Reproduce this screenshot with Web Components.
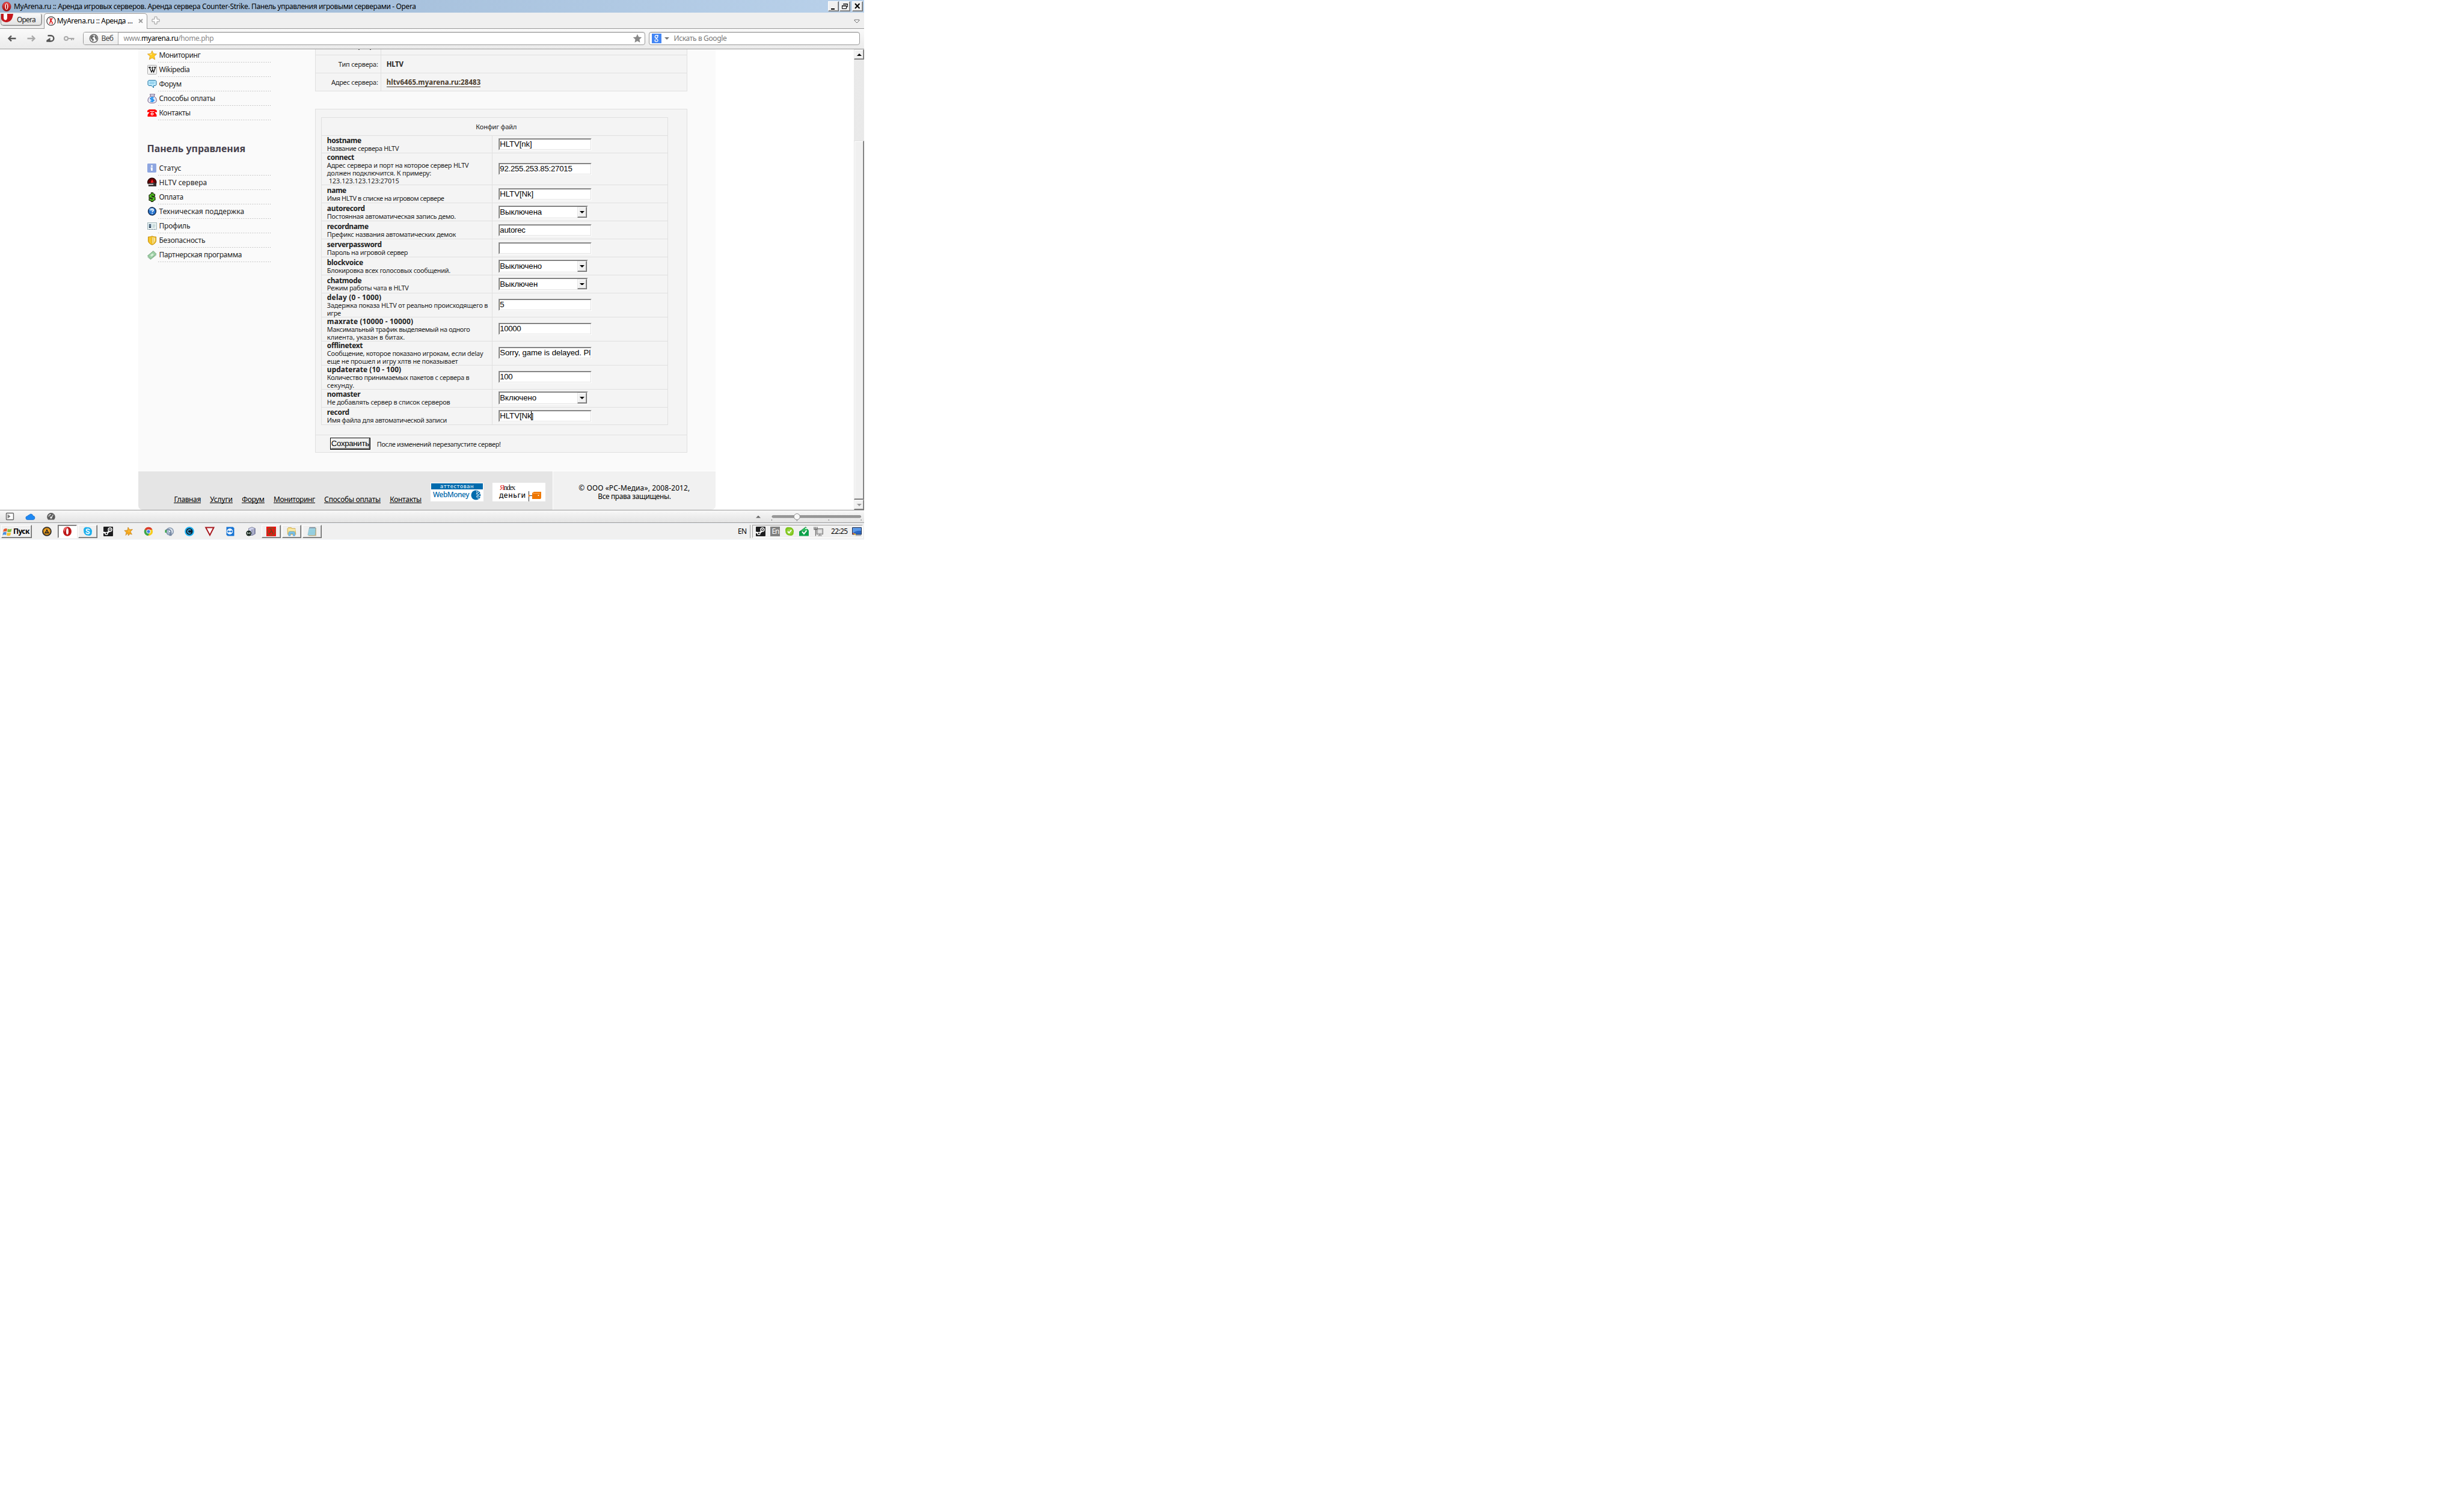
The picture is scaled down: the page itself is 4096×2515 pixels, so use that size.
<!DOCTYPE html>
<html lang="ru">
<head>
<meta charset="utf-8">
<title>MyArena.ru</title>
<style>
html,body{margin:0;padding:0;background:#fff;overflow:hidden}
</style>
</head>
<body>
<desktop-shot></desktop-shot>
<script>
const T='"Noto Sans","DejaVu Sans",sans-serif';
const SCALE=0.998;
const make=(name,css,html,after)=>customElements.define(name,class extends HTMLElement{
  constructor(){super();this.attachShadow({mode:'open'});}
  connectedCallback(){
    if(this.done)return;this.done=true;
    this.shadowRoot.innerHTML='<style>*{box-sizing:border-box}'+css+'</style>'+(typeof html==='function'?html(this):html);
    if(after)after(this);
  }
});
const I={
opera:'<defs><linearGradient id="g" x2="0" y2="1"><stop stop-color="#f05050"/><stop offset="1" stop-color="#a00808"/></linearGradient></defs><ellipse cx="8" cy="8" rx="7.2" ry="7.8" fill="url(#g)" stroke="#8a0c0c" stroke-width=".5"/><ellipse cx="8" cy="8" rx="2.6" ry="5.4" fill="#fff"/><ellipse cx="8" cy="8" rx="1.1" ry="4.6" fill="#b01515"/>',
operaTask:'<ellipse cx="8" cy="8" rx="7" ry="7.8" fill="#c01818"/><ellipse cx="6" cy="5" rx="4" ry="4" fill="#e86060"/><ellipse cx="8" cy="8" rx="3.6" ry="5.8" fill="#b01010"/><ellipse cx="8" cy="8" rx="2" ry="5.2" fill="#fff"/>',
cs:'<circle cx="8" cy="8" r="7.2" fill="#fff" stroke="#333" stroke-width="1.2"/><path d="M5 3.5h6v1.2H9.5l-.8 2.8 2.3 3-.8 3-1.3-.2.4-2.5-1.7-1.8-1.4 4-1.4-.4 1.3-4.6.4-3.2H5z" fill="#d22"/>',
back:'<path d="M7 3.500 2.500 8 7 12.500M3 8h11.500" fill="none" stroke="#555" stroke-width="2.4"/>',
fwd:'<path d="M9 3.500 13.500 8 9 12.500M13 8H1.500" fill="none" stroke="#aaa" stroke-width="2.4"/>',
reload:'<path d="M3.500 3.200h5.200a4.700 4.700 0 0 1 0 9.400H6" fill="none" stroke="#555" stroke-width="2.400"/><path d="M7.500 6.800v7H1.300V11z" fill="#555"/>',
key:'<circle cx="4" cy="8" r="3" fill="none" stroke="#aaa" stroke-width="2"/><path d="M7 8h10.5M13 8v3M16 8v2.6" stroke="#aaa" stroke-width="2"/>',
globe:'<circle cx="8" cy="8" r="6.6" fill="#fff" stroke="#6a6a6a" stroke-width="1.6"/><path d="M3 4.5 6 3l2.500.8-.6 2-2 .8.3 1.700 2 .8-.5 2.500-1.600 1.600-1-2.700L2.500 8zM10 3l2.500 1.800 1.200 3.500-1.500 2.700-1.500-2-.5-2L9 6z" fill="#6a6a6a"/>',
star:'<path d="M8 .8l2.200 4.700 5.100.6-3.800 3.500 1 5.200L8 12.200l-4.500 2.600 1-5.200L.7 6.100l5.100-.6z" fill="#888"/>',
star2:'<path d="M8 .4l2.200 4.900 5.400.6-4 3.700 1.100 5.500L8 12.400l-4.700 2.700 1.100-5.500-4-3.700 5.400-.6z" fill="#ffcc22" stroke="#d89a20" stroke-width=".8"/><path d="M8 2.500 6.600 6l-3.600.6 4 1z" fill="#fff0a0"/>',
google:'<rect width="16" height="16" fill="#4285f4"/><g fill="none" stroke="#fff" stroke-width="1.300"><ellipse cx="7.600" cy="5" rx="2.300" ry="2.400"/><path d="M9 3h2M8 7.400c-2 1 .2 1.600 1.400 2.400 1.600 1.200.6 3.600-2 3.600s-3.400-2.400-1-3.400"/></g>',
wiki:'<rect x=".5" y=".5" width="15" height="15" rx="1" fill="#f2f2f2" stroke="#aaa"/><path d="M2 4h4M8 4h2M11 4h3.500M3.500 4 7 12 9 7.500 7.500 4.200M8.500 7.500 10.600 12 13.500 4" fill="none" stroke="#111" stroke-width="1.300"/>',
forum:'<path d="M2.500 1.500h11l1.500 1.500v6l-1.500 1.500h-3v3.500l-3.500-3.500H2.500L1 9V3z" fill="#bfeafc" stroke="#1a6fa0"/><path d="M3.500 4.500h9M3.500 7h8" stroke="#62b4dc"/>',
money:'<path d="M4.500.8h8l-1.500 3.400c3 1.500 4.200 4 4.200 6.800 0 3.200-2 4.400-7.200 4.400S1 14 1 11c0-3 1.500-5.300 4.500-6.800z" fill="#e8eaf6" stroke="#6a5580"/><path d="M5 4h6.500" stroke="#6a5580"/><path d="M11 6.500H6.500L5 8l1.500 1.500h3L11 11l-1.500 1.500H5M8 5v9" fill="none" stroke="#1a90f0" stroke-width="1.700"/>',
phone:'<path d="M0 6.500V4l3-2h10l3 2v2.500h-4.500V5h-7v1.500zM4 6h8l3.500 5v3H.5v-3z" fill="#f00"/><circle cx="8" cy="9.600" r="2.400" fill="#fff"/><circle cx="8" cy="9.600" r="1.100" fill="#f00"/>',
info:'<rect x="0" y="0" width="15" height="15" rx="1.500" fill="#8ea6e0"/><path d="M6.200 2.800h2.600v2.600H6.200zM5.500 6.500h3.300v5.500H6.200z" fill="#fff"/>',
hltv:'<path d="M1 9a7 7 0 1 1 13.500 0z" fill="#600" stroke="#200" stroke-width="1.400"/><path d="M8 2 5.500 8h5z" fill="#f22"/><path d="M1.500 9 11 7.500l4 1.500v5H2z" fill="#332e2e"/><path d="M2 9.800h8v1.700H2z" fill="#ddd"/>',
dollar:'<path d="M6.500.5h3v1.800l3 1v3H9L7.500 5.500v1l5.500 2v4l-3.500 1.700v1.300h-3v-1.300l-3.500-1v-3h3l1.500 1.300 1-.4V10L3 8.500v-4l3.500-2z" fill="#4fc21e" stroke="#222c10" stroke-width="1.200"/>',
help:'<circle cx="8" cy="7.500" r="6.500" fill="#2c78d0" stroke="#0c2244" stroke-width="1.300"/><ellipse cx="7" cy="4.500" rx="4" ry="2.500" fill="#74aeea"/><path d="M6 5.500c0-2.500 4.200-2.200 4.200.2C10.200 7 8.200 7.200 8.200 8.600M8.200 10v1.600" fill="none" stroke="#fff" stroke-width="1.600"/>',
card:'<rect x=".5" y="2.500" width="15" height="11" fill="#edf5f5" stroke="#9fb4b8"/><rect x="2" y="4.500" width="5" height="6.500" fill="#a8c4d8"/><circle cx="4.500" cy="6.300" r="1.300" fill="#234"/><path d="M3 11V8.500h3V11z" fill="#234"/><path d="M8.500 6h5M8.500 8h5M8.500 10h4" stroke="#a5bcbc" stroke-width=".9"/><path d="M3 13.500h10" stroke="#789" stroke-dasharray="2 2"/>',
shield:'<path d="M1.500 2Q5 2.400 8 .8 11 2.400 14.500 2v7q-1 4.600-6.500 6.300Q2.500 13.600 1.500 9z" fill="#f6c62c" stroke="#c08a10"/><path d="M8 2.600v11q4.300-1.500 5-5V3.500Q10 3.600 8 2.600z" fill="#fff3b4"/><path d="M8 2.600v11M10.800 3.500v8.500" stroke="#dca51c"/>',
cash:'<path d="M.5 9.500 10 1.500l5 5-9.500 8.500z" fill="#9cd0a4" stroke="#6f9c78" stroke-width=".9"/><path d="M.5 11.500 5.500 15.500 15 8" fill="none" stroke="#8bb894"/><ellipse cx="7.800" cy="8" rx="2.800" ry="1.900" transform="rotate(-40 8 8)" fill="#d2ecd4"/>',
panel:'<rect x="1.500" y="2.500" width="12" height="11" rx="1" fill="#fff" stroke="#666" stroke-width="1.400"/><path d="M4 4.500v7M4.500 5.500 8 8l-3.500 2.500z" stroke="#777" fill="#777" stroke-width=".8"/>',
cloud:'<path d="M3 13.500a3 3 0 0 1-.3-6 2.500 2.500 0 0 1 2.500-1.700 3.600 3.600 0 0 1 6.700 1.200 3.300 3.300 0 0 1 .6 6.500z" fill="#1e88f2" stroke="#1468c4" stroke-width=".7"/>',
gauge:'<path d="M3 13.500a6.800 6.800 0 1 1 10 0z" fill="#5a5a5a"/><path d="M4 8.500a4 4 0 0 1 4-3.600M11.500 5 9 9.500" fill="none" stroke="#eee" stroke-width="1.100"/><circle cx="8" cy="10" r="1.700" fill="#eee"/>',
flag:'<path d="M1 4.500Q4 2 7 3.500L6 8.500Q3 7 .3 9z" fill="#e4572e"/><path d="M8 3.800Q11 5.500 14.500 3.500L13.500 8.500Q10 10 7 8.600z" fill="#7fb93c"/><path d="M.2 10Q3 8 5.800 9.500L5 14Q2 12.500-.7 14.500z" fill="#4a90dc"/><path d="M6.800 9.700q3 1.500 6.400 0L12.200 14.500q-3 1.600-6.200.1z" fill="#f7c331"/>',
aimp:'<circle cx="8" cy="8" r="7" fill="#f6a623" stroke="#222" stroke-width="1.600"/><circle cx="8" cy="8" r="5.300" fill="none" stroke="#6b4408" stroke-width=".6"/><path d="M8 3.800 4 11.200h8z" fill="#222"/><path d="M8 7 6.700 9.600h2.600z" fill="#f6a623"/>',
skype:'<path d="M1 5A4.500 4.500 0 0 1 7 1a7 7 0 0 1 7.800 8.800A4.500 4.500 0 0 1 9 14.800 7 7 0 0 1 1.200 7z" fill="#1db0ee"/><path d="M10.800 5.800C10.500 3.300 5.300 3.400 5.500 6c.2 2.300 5.200 1.500 5.200 3.900 0 2.400-5.200 2.300-5.600-.2" fill="none" stroke="#fff" stroke-width="1.700"/>',
steam:'<rect width="16" height="16" rx="1" fill="#1c1c1e"/><path d="M0 9.500 5.500 11 10 7.500" stroke="#fff" stroke-width="2.600" fill="none"/><circle cx="11" cy="5" r="3" fill="#1c1c1e" stroke="#fff" stroke-width="1.500"/><circle cx="11" cy="5" r="1.200" fill="#ddd"/><circle cx="5" cy="11.500" r="2" fill="#1c1c1e" stroke="#fff" stroke-width="1.300"/>',
fig:'<path d="M7 1l2.500 4 5-.5-3.500 4 2.500 4.500-3.500-1L7.500 15l-1-4-3.500 3.500 1-5L.8 6.500 6 6z" fill="#f6a81c" stroke="#b87408" stroke-width=".6"/><path d="M7 3.500 8 7l3-.5-3 2z" fill="#ffd870"/>',
chrome:'<circle cx="8" cy="8" r="7.200" fill="#f6cb1c"/><path d="M8 8 1.600 4.600A7.200 7.200 0 0 1 14.500 5H8z" fill="#dc3a2c"/><path d="M8 8 1.600 4.600A7.200 7.200 0 0 0 7.200 15.200L10.500 9.500z" fill="#3aa64c"/><circle cx="8" cy="8" r="3.600" fill="#fff"/><circle cx="8" cy="8" r="2.600" fill="#3b7de0"/>',
ts:'<circle cx="9.500" cy="8" r="5.800" fill="#e4ebf3" stroke="#8fa0b6" stroke-width="1.800"/><path d="M3 6a5 5 0 0 1 8.500 3v5.500h-2V9" fill="none" stroke="#6f839e" stroke-width="1.800"/><rect x="1.500" y="5.500" width="2.600" height="4.500" fill="#35a24a"/><path d="M6.500 6v8" stroke="#8ba0bc" stroke-width="2"/>',
cc:'<circle cx="8" cy="8" r="7.800" fill="#1aaef0"/><circle cx="8" cy="8" r="5.600" fill="#10202e"/><path d="M10.300 6A3 3 0 1 0 10.300 10" fill="none" stroke="#38b4ee" stroke-width="1.500"/>',
vv:'<path d="M1.200 1.500h13.300L8 14.200z" fill="#fff" stroke="#a8181e" stroke-width="2"/>',
tv:'<path d="M1.500.5h11l2 2v13h-11l-2-2z" fill="#1774d4"/><circle cx="7.200" cy="8" r="5" fill="#eef6ff"/><path d="M2.800 8 5.500 5.800v1.500h3.500V5.800L11.800 8 9 10.200V8.700H5.500v1.500z" fill="#1774d4"/>',
box:'<path d="M4.500 3 10 .8 15.500 3v9L11 14.500H5z" fill="#cfd3ec" stroke="#6b6f8c" stroke-width=".8"/><path d="M9 5l6-2v9l-5 2z" fill="#8b90b4"/><path d="M12 4v8" stroke="#eee"/><circle cx="4.800" cy="11" r="4.500" fill="#16241c"/><path d="M2.700 12.800V9.300L4.800 12l2.100-2.700v3.500" stroke="#d8e4d8" fill="none"/>',
lambda:'<rect width="16" height="16" fill="#f01010"/><circle cx="8" cy="8" r="6.300" fill="none" stroke="#7a5a28" stroke-width="1.500"/><path d="M5.500 4h2L11 12M8 7.500 5 12.200" fill="none" stroke="#6a4a20" stroke-width="1.600"/>',
folder:'<path d="M1 3.500 2.500 1.500h5L8.500 3h5.500v2l1 8H1.500z" fill="#f3dc86" stroke="#c7a548" stroke-width=".8"/><path d="M2.500 5.500h12" stroke="#fff6c8" stroke-width="1.400"/><path d="M3 15.200V9.700l1.500-1.500h7.500l1.500 1.500v5.500h-3v-3.500H6v3.500z" fill="#7cc3ec" stroke="#4b93c4" stroke-width=".7"/>',
note:'<path d="M4 2h11v13.500H2z" fill="#c9b484"/><path d="M3.500 1.800h10.300L13 14H1z" fill="#a6d9e8" stroke="#6aa6ba" stroke-width=".6"/><path d="M3.500 5.500h9.500M3.200 7.500h9.500M3 9.500h9.500M2.600 11.500h9.500" stroke="#78bccf" stroke-width=".7"/><path d="M4 1.800h10" stroke="#556" stroke-width="2" stroke-dasharray="1 1"/>',
skypeg:'<path d="M1 5A4.500 4.500 0 0 1 7 1a7 7 0 0 1 7.800 8.800A4.500 4.500 0 0 1 9 14.800 7 7 0 0 1 1.200 7z" fill="#7ec41c"/><circle cx="8" cy="8" r="4.800" fill="#95d43a"/><path d="M5 8l2.300 2.300L11.200 5.500" fill="none" stroke="#fff" stroke-width="1.900"/>',
usb:'<path d="M0 8 5 6v9.500H0zM5 6h11v9.500H5z" fill="#0ba14a"/><path d="M1 8 11 .5l4 4.500-4 3z" fill="#2fbf5f" stroke="#087838" stroke-width=".7"/><path d="M10 3h6" stroke="#fff" stroke-width="1.500"/><path d="M5 8.500l3 3.500 4.500-5.500" fill="none" stroke="#fff" stroke-width="2"/>',
net:'<rect x="5.500" y="3.500" width="10" height="9" fill="#c9c9c9" stroke="#777"/><rect x="7.500" y="5.500" width="6" height="5" fill="#e6e6e6"/><path d="M7 15h7M10.500 13v2" stroke="#777"/><path d="M1 .5v4h5v-4M3.500.5v3.500M3.500 5v10.500" stroke="#666" stroke-width="1.300" fill="none"/>',
screen:'<path d="M.5 1.500h15v11.500H.5z" fill="#2c66c0" stroke="#1a2c50"/><path d="M1 2h14v5Q7 6 1 11z" fill="#5b98e6"/><path d="M6 14.500h9" stroke="#aaa" stroke-width="1.600"/><path d="M1 10.500h2.500v2.300H1z" fill="#e85a30"/><path d="M3.500 11.500H6V14H3.500z" fill="#f2c530"/>'
};
make('ui-icon',':host{display:inline-flex;flex:none;width:16px;height:16px}svg{display:block;width:100%;height:100%;overflow:visible}',
 e=>`<svg viewBox="0 0 16 16">${I[e.getAttribute('name')]}</svg>`);

make('title-bar',`:host{display:flex;height:21px;background:linear-gradient(90deg,#99b4d1,#b9d1ea);align-items:center;padding:0 2px 0 3px;font:12px ${T};color:#000}
 .t{margin-left:4px;flex:1;line-height:20px;padding-top:1px}
 b{display:flex;width:18px;height:17px;margin-right:1px;background:#f0f0f0;border:1px solid;border-color:#fff #696969 #696969 #fff;box-shadow:inset -1px -1px #a0a0a0}b:last-child{margin:0 0 0 2px}svg{width:16px;height:15px}`,
 `<ui-icon name="opera"></ui-icon><div class="t"><fit-text w="670">MyArena.ru :: Аренда игровых серверов. Аренда сервера Counter-Strike. Панель управления игровыми серверами - Opera</fit-text></div>
 <b><svg><path d="M4 11h6v2H4z"/></svg></b><b><svg fill="none" stroke="#000"><path d="M5.500 3.500h7v5h-2M5 4h8M3.500 6.500h7v5h-7zM3 7h8"/></svg></b><b><svg><path d="M4 3l7.500 8M11.500 3 4 11" stroke="#000" stroke-width="2"/></svg></b>`);

make('tab-strip',`:host{display:flex;height:27px;background:#efefef;border-bottom:1px solid #999;font:12px/19px ${T};color:#000}
 .o{width:69px;height:20px;margin:2px 0 0 1px;border:1px solid #888;border-top:0;border-radius:0 3px 5px 5px;background:linear-gradient(#f8f8f8,#e2e2e2);display:flex;color:#222;box-shadow:inset -1px -1px #bbb}
 .o fit-text{margin-left:6px;line-height:20px}.o svg{width:20px;height:15px;flex:none}
 .tab{margin:1px 0 -1px 3px;width:173px;height:26px;border:1px solid #999;border-width:1px 1px 0;border-radius:5px 5px 0 0;background:linear-gradient(#fff,#f9f9f9);display:flex;align-items:center;padding-left:3px}
 .tab fit-text{margin-left:2px;line-height:26px}.x{width:8px;height:8px;margin-left:10px}
 .plus{width:14px;height:14px;margin:6px 0 0 7px}.m{width:10px;height:7px;margin:11px 7px 0 auto}`,
 `<div class="o"><svg><path d="M0 0h20Q18.500 14 8 14 1 13 0 8z" fill="#c4161c"/><path d="M4 0h6v6Q10 10 7.500 10.500 4 10.500 4 6z" fill="#fff"/></svg><fit-text w="31">Opera</fit-text></div>
 <div class="tab"><ui-icon name="cs"></ui-icon><fit-text w="126">MyArena.ru :: Аренда ...</fit-text><svg class="x"><path d="M1 1l6 6M7 1 1 7" stroke="#999" stroke-width="1.800"/></svg></div>
 <svg class="plus"><path d="M5 1h4v4h4v4H9v4H5V9H1V5h4z" fill="#fff" stroke="#999"/></svg><svg class="m"><path d="M1 1h8v1L5 6 1 2z" fill="#fff" stroke="#666"/></svg>`);

make('address-bar',`:host{display:flex;height:34px;background:linear-gradient(#fafafa,#ebebeb);border-bottom:1px solid #999;align-items:center;font:12px/20px ${T};color:#888}
 .f{height:22px;border:1px solid #999;border-radius:4px;background:#fff;display:flex;align-items:center;box-shadow:inset 0 1px #ddd}
 .a{margin-left:12px;width:937px;overflow:hidden}.w{width:59px;height:20px;border-right:1px solid #aaa;background:linear-gradient(#fcfcfc,#ececec);display:flex;align-items:center;padding-left:9px;color:#444}
 .w fit-text{margin-left:5px}i{font-style:normal;color:#000}.s{margin-left:6px;width:352px;padding-left:4px;color:#777}`,
 `<ui-icon name="back" style="margin-left:12px"></ui-icon><ui-icon name="fwd" style="margin-left:16px"></ui-icon><ui-icon name="reload" style="margin-left:16px"></ui-icon><ui-icon name="key" style="margin:0 4px 0 14px"></ui-icon>
 <div class="f a"><div class="w"><ui-icon name="globe"></ui-icon><fit-text w="20">Веб</fit-text></div><fit-text w="150" style="margin-left:8px">www.<i>myarena.ru</i>/home.php</fit-text><ui-icon name="star" style="margin:0 4px 0 auto"></ui-icon></div>
 <div class="f s"><ui-icon name="google"></ui-icon><svg width="8" height="4" style="margin:0 8px 0 5px"><path d="M0 0h8L4 4z" fill="#777"/></svg><fit-text w="88">Искать в Google</fit-text></div>`);

const menu=a=>a.map(([i,t,w])=>`<menu-row icon="${i}"><fit-text w="${w}">${t}</fit-text></menu-row>`).join('');
make('menu-row',`:host{display:flex;height:24px;align-items:center}
 div{margin-left:3px;flex:1;height:24px;line-height:25px;padding-left:1px;background:repeating-linear-gradient(90deg,#aaa 0 1px,transparent 1px 3px) 0 100%/100% 1px no-repeat}`,
 e=>`<ui-icon name="${e.getAttribute('icon')}"></ui-icon><div><slot></slot></div>`);
make('side-menu',`:host{display:block;width:221px;padding-left:15px;font:12px ${T};color:#222}
 h2{font:bold 16px/24px ${T};color:#46414d;margin:36px 0 9px;height:24px}section{height:120px;margin-top:-2px}.n{margin-top:0}`,
 `<section>${menu([['star2','Мониторинг',69],['wiki','Wikipedia',51],['forum','Форум',37.5],['money','Способы оплаты',93.5],['phone','Контакты',52.5]])}</section>
 <h2><fit-text w="164">Панель управления</fit-text></h2>
 <section class="n">${menu([['info','Статус',37],['hltv','HLTV сервера',80],['dollar','Оплата',40.5],['help','Техническая поддержка',142],['card','Профиль',52],['shield','Безопасность',77],['cash','Партнерская программа',138]])}</section>`);

make('text-box',`:host{display:block;width:155px;height:20px;background:#fff;border:1px solid;border-color:#a0a0a0 #fff #fff #a0a0a0;font:13.33px/17px "Liberation Sans",Arial,sans-serif;color:#000;margin-left:10px;overflow:hidden}
 div{height:18px;border:1px solid;border-color:#696969 #e3e3e3 #e3e3e3 #696969;white-space:nowrap;overflow:hidden}`,'<div><slot></slot></div>');
make('select-box',`:host{display:block;width:149px;height:22px;background:#fff;border:1px solid;border-color:#a0a0a0 #fff #fff #a0a0a0;font:13.33px/19px "Liberation Sans",Arial,sans-serif;color:#000;margin-left:10px}
 div{height:20px;border:1px solid;border-color:#696969 #e3e3e3 #e3e3e3 #696969;display:flex;justify-content:space-between}
 b{width:16px;height:18px;background:#f0f0f0;border:1px solid;border-color:#e3e3e3 #696969 #696969 #e3e3e3;box-shadow:inset -1px -1px #a0a0a0,inset 1px 1px #fff}svg{display:block;margin:6px 0 0 3px}`,
 '<div><slot></slot><b><svg width="8" height="4"><path d="M0 0h8L4 4z"/></svg></b></div>');

make('config-row',`:host{display:flex;border-top:1px solid #e0e0e0}.l{width:285px;border-right:1px solid #e0e0e0;padding:2px 0 0 9px;display:flex;flex-direction:column;justify-content:center}
 .v{display:flex;align-items:center;flex:1}::slotted(fit-text){display:block}`,'<div class="l"><slot></slot></div><div class="v"><slot name="v"></slot></div>');
const rows=[
[30,'hostname',57,[['Название сервера HLTV',119.5]],'t','HLTV[nk]',53.5],
[53,'connect',45,[['Адрес сервера и порт на которое сервер HLTV',236],['должен подключится. К примеру:',173.500],['&nbsp;123.123.123.123:27015',120]],'t','92.255.253.85:27015',120.5],
[30,'name',32,[['Имя HLTV в списке на игровом сервере',195]],'t','HLTV[Nk]',56],
[30,'autorecord',63,[['Постоянная автоматическая запись демо.',214.500]],'s','Выключена',70],
[30,'recordname',69,[['Префикс названия автоматических демок',214.500]],'t','autorec',42.5],
[30,'serverpassword',91,[['Пароль на игровой сервер',134.500]],'t','',0],
[30,'blockvoice',60,[['Блокировка всех голосовых сообщений.',205.500]],'s','Выключено',70],
[30,'chatmode',57.5,[['Режим работы чата в HLTV',136]],'s','Выключен',63],
[40,'delay (0 - 1000)',90.500,[['Задержка показа HLTV от реально происходящего в',268],['игре',23]],'t','5',7],
[40,'maxrate (10000 - 10000)',143.500,[['Максимальный трафик выделяемый на одного',238],['клиента, указан в битах.',129.500]],'t','10000',35],
[40,'offlinetext',59.500,[['Сообщение, которое показано игрокам, если delay',260],['еще не прошел и игру хлтв не показывает',218]],'t','Sorry, game is delayed. Pl',151],
[40,'updaterate (10 - 100)',123.500,[['Количество принимаемых пакетов с сервера в',237],['секунду.',45.500]],'t','100',21],
[30,'nomaster',55.500,[['Не добавлять сервер в список серверов',205]],'s','Включено',61],
[30,'record',37,[['Имя файла для автоматической записи',199.500]],'t','HLTV[Nk]',56,1]];
make('config-table',`:host{display:block;width:578px;border:1px solid #e0e0e0;font:11px/13px ${T};color:#222}
 .h{height:29px;line-height:31px;text-align:center;padding-left:6px}.b{font-weight:bold;font-size:12px}u{display:inline-block;width:1px;height:15px;background:#000;margin-left:-4px;vertical-align:-3px}`,
 '<div class="h"><fit-text w="68">Конфиг файл</fit-text></div>'+rows.map(r=>{
  const c=r[4]=='t'?'text-box':'select-box';
  return `<config-row style="height:${r[0]}px"><fit-text class="b" w="${r[2]}">${r[1]}</fit-text>${r[3].map(d=>`<fit-text w="${d[1]}">${d[0]}</fit-text>`).join('')}<${c} slot="v">${r[5]?`<fit-text w="${r[6]}">${r[5]}</fit-text>`:''}${r[7]?'<u></u>':''}</${c}></config-row>`}).join(''));

make('info-panel',`:host{display:block;width:620px;height:70px;border:1px solid #e0e0e0;border-top:0;background:#f4f4f4;font:11px/30px ${T};color:#222}
 .r{display:flex;height:30px;border-top:1px solid #e0e0e0}.z{height:9px;border:0}.k{width:109px;border-right:1px solid #e0e0e0;text-align:right;padding-right:4px}.v{padding-left:9px;font-weight:bold;font-size:11.500px}
 .z .k{background:linear-gradient(#555,#555) 71px 0/2px 1px no-repeat,linear-gradient(#555,#555) 90px 0/2px 1px no-repeat}
 a{color:#4a3c2c;display:inline-block;line-height:13px;border-bottom:1px solid #4a3c2c}`,
 `<div class="r z"><div class="k"></div></div><div class="r"><div class="k"><fit-text w="66">Тип сервера:</fit-text></div><div class="v"><fit-text w="28">HLTV</fit-text></div></div>
 <div class="r"><div class="k"><fit-text w="78">Адрес сервера:</fit-text></div><div class="v"><a><fit-text w="157">hltv6465.myarena.ru:28483</fit-text></a></div></div>`);
make('config-panel',`:host{display:block;width:620px;height:574px;margin-top:29px;border:1px solid #e0e0e0;background:#f4f4f4;font:11px ${T};color:#222}
 .p{padding:13px 0 0 9px;height:542px}.s{border-top:1px solid #e0e0e0;height:30px;display:flex;align-items:center;padding-left:24px}
 button{all:unset;width:67px;height:20px;border:1px solid #000;box-sizing:border-box;background:#f0f0f0;box-shadow:inset -1px -1px #696969,inset 1px 1px #fff,inset -2px -2px #a0a0a0;font:13.33px/18px "Liberation Sans",Arial,sans-serif;color:#000;padding-left:1px;margin-right:11px}`,
 `<div class="p"><config-table></config-table></div><div class="s"><button><fit-text w="63">Сохранить</fit-text></button><fit-text w="206.500" style="padding-top:1px">После изменений перезапустите сервер!</fit-text></div>`);

make('wm-badge',`:host{display:flex;flex-direction:column;width:88px;height:31px;background:#fff;padding:1px;color:#0068ab;font:bold 8.500px/10px "DejaVu Sans",sans-serif}
 .t{background:#006bad;color:#fff;text-align:center;height:10px;font-weight:normal}.b{display:flex;align-items:center;height:19px;padding-left:3px;font:500 12px/19px "Noto Sans",sans-serif}svg{margin-left:3px}`,
 `<div class="t"><fit-text w="56">аттестован</fit-text></div><div class="b"><fit-text w="60">WebMoney</fit-text><svg width="17" height="17"><circle cx="8.500" cy="8.500" r="8" fill="#006bad"/><path d="M10 1.500v6M13 3l-4 5M16 6l-6 3M16 11l-6-1.500M13 14l-4-3.500" stroke="#fff" stroke-width="1.300" stroke-dasharray="2 1"/></svg></div>`);
make('ya-badge',`:host{display:flex;width:88px;height:31px;background:#fff;padding-left:11px;font:12.500px/12px "Liberation Serif",serif;color:#111}
 .x{width:46px;padding-top:3px}i{font-style:normal;color:#e02020}.d{font:500 12px/12px "Noto Sans",sans-serif}fit-text{display:block}`,
 `<div class="x"><fit-text w="25" style="margin-left:1px"><i>Я</i>ndex</fit-text><fit-text class="d" w="45">деньги</fit-text></div><svg width="28" height="31"><path d="M3.500 14v17M3 21.500h6" stroke="#333"/><circle cx="4" cy="21.500" r="1.500" fill="#f08020"/><path d="M9 17l3-2h12v10l-1 2H9z" fill="#ee7600"/><path d="M10 17.500h12" stroke="#ffb060"/><circle cx="19.500" cy="21" r="1" fill="#fff"/></svg>`);
make('site-footer',`:host{display:flex;width:962px;height:65px;border-top:1px solid #fff;font:12px/14px ${T};color:#000}
 .l{width:691px;background:#e5e5e5;border-radius:0 0 0 7px;display:flex;align-items:flex-start;padding-left:60px}.l a{margin:39px 15.400px 0 0;border-bottom:1px solid #000;height:14px;line-height:16px}
 .r{flex:1;border-left:1px solid #fff;background:#f1f1f1;border-radius:0 0 7px 0;text-align:center;padding:21px 0 0}`,
 `<div class="l">${[['Главная',44.6],['Услуги',37.6],['Форум',37.6],['Мониторинг',69],['Способы оплаты',93.7],['Контакты',52.7]].map(a=>`<a><fit-text w="${a[1]}">${a[0]}</fit-text></a>`).join('')}<wm-badge style="margin-top:19px"></wm-badge><ya-badge style="margin:19px 0 0 15px"></ya-badge></div>
 <div class="r"><fit-text w="185.500">© ООО «РС-Медиа», 2008-2012,</fit-text><br><fit-text w="121.500">Все права защищены.</fit-text></div>`);

make('scroll-bar',`:host{display:flex;flex-direction:column;width:17px;height:768px;background:repeating-conic-gradient(#fff 0 25%,#d4d4d4 0 50%) 0 0/2px 2px}
 div{background:#f0f0f0;border:1px solid;border-color:#e3e3e3 #696969 #696969 #e3e3e3;box-shadow:inset -1px -1px #a0a0a0,inset 1px 1px #fff;height:17px;flex:none}svg{display:block;margin:6px 0 0 4px}`,
 `<div><svg width="8" height="4"><path d="M4 0 8 4H0z"/></svg></div><div style="height:598px;margin-top:136px"></div><div><svg width="8" height="4"><path d="M0 0h8L4 4z" fill="#999"/></svg></div>`);

make('page-view',`:host{display:flex;height:768px;background:#fff;overflow:hidden;justify-content:space-between}
 .c{margin-left:230px;width:962px;background:linear-gradient(#fafafa,#fafafa) 0 0/100% 703px no-repeat}.m{display:flex;height:703px}.x{margin-left:74px}`,
 `<div class="c"><div class="m"><side-menu></side-menu><div class="x"><info-panel></info-panel><config-panel></config-panel></div></div><site-footer></site-footer></div><scroll-bar></scroll-bar>`);

make('status-bar',`:host{display:flex;height:22px;border-top:1px solid #999;border-bottom:1px solid #999;background:linear-gradient(#f8f8f8,#e3e3e3);align-items:center;padding-left:9px}
 ui-icon{margin-right:18px}.z{margin-left:auto;margin-right:3px}`,
 `<ui-icon name="panel"></ui-icon><ui-icon name="cloud"></ui-icon><ui-icon name="gauge"></ui-icon>
 <svg class="z" width="180" height="20"><path d="M2 12.500 6 8.500l4 4z" fill="#666"/><rect x="29" y="8.500" width="148" height="3.500" rx="1.700" fill="#999" stroke="#777" stroke-width=".7"/><path d="M28.500 15v2M70.500 15v3M123.500 15v2M177.500 15v2" stroke="#777"/><circle cx="70.500" cy="10.500" r="5" fill="#f8f8f8" stroke="#888"/></svg>`);

const tasks=['aimp','operaTask*','skype+','steam','fig','chrome','ts','cc','vv','tv','box','lambda+','folder+','note+'];
make('task-bar',`:host{display:flex;height:28px;border-top:2px solid #f3f7fb;border-bottom:2px solid #f3f7fb;background:#f0f0f0;align-items:center;font:12px/22px ${T};color:#000}
 .b,.p{border:1px solid;border-color:#fff #696969 #696969 #fff;box-shadow:inset -1px -1px #a0a0a0;height:22px}.p{border-color:#696969 #fff #fff #696969;background:#fff;box-shadow:inset 1px 1px #a0a0a0}
 .s{width:51px;margin:0 8px 0 2px;display:flex;align-items:center;padding-left:2px;font-weight:bold;line-height:20px}.c{width:34px;display:flex;justify-content:center}.c>div{width:32px;display:flex;align-items:center;justify-content:center;height:22px}
 .tray{border:1px solid;border-color:#a0a0a0 #fff #fff #a0a0a0;height:22px;width:185px;margin:0 2px 0 3px;display:flex;align-items:center;padding-left:6px}.tray ui-icon{margin-right:8px}
 .en{margin-left:auto;border-right:1px solid #a0a0a0;height:22px;padding-right:5px}.k{width:16px;height:16px;background:#808080;color:#fff;line-height:16px;margin-right:8px;padding-left:2px}`,
 `<div class="b s"><ui-icon name="flag"></ui-icon><fit-text w="27" style="margin-left:1px">Пуск</fit-text></div>
 ${tasks.map(t=>`<div class="c"><div class="${/\+/.test(t)?'b':/\*/.test(t)?'p':''}"><ui-icon name="${t.replace(/[+*]/,'')}"></ui-icon></div></div>`).join('')}
 <div class="en"><fit-text w="14.500">EN</fit-text></div><div class="tray"><ui-icon name="steam"></ui-icon><div class="k"><fit-text w="12">En</fit-text></div><ui-icon name="skypeg"></ui-icon><ui-icon name="usb"></ui-icon><ui-icon name="net"></ui-icon><fit-text w="27.500" style="margin:0 7px 0 5px">22:25</fit-text><ui-icon name="screen" style="margin:0"></ui-icon></div>`);

make('desktop-shot',`:host{display:block;width:4104px;height:2520px;zoom:${SCALE};background:#fff}.w{width:1440px;height:900px;overflow:hidden;display:flex;flex-direction:column;background:#f0f0f0}.w>*{flex:none}`,
 '<div class="w"><title-bar></title-bar><tab-strip></tab-strip><address-bar></address-bar><page-view></page-view><status-bar></status-bar><task-bar></task-bar></div>');

/* Sets the tracking of a run of text so that it fills the width given in "w". */
make('fit-text',':host{display:inline-block;white-space:nowrap}span{display:inline-block}','<span><slot></slot></span>',e=>{
  const s=e.shadowRoot.querySelector('span'),w=+e.getAttribute('w'),n=e.textContent.length;
  s.style.letterSpacing=((w-s.getBoundingClientRect().width/SCALE)/n).toFixed(3)+'px';
});
</script>
</body>
</html>
